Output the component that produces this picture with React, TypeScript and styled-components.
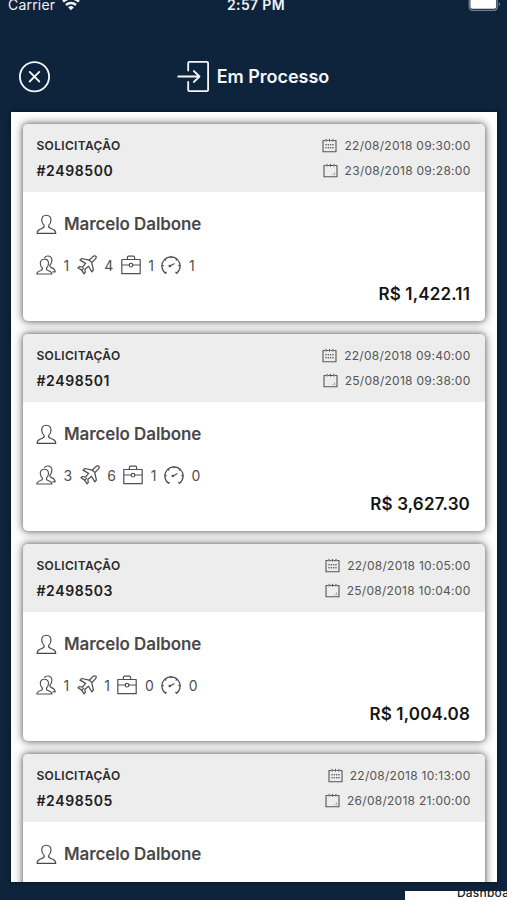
import React from 'react';
import styled, { createGlobalStyle } from 'styled-components';

const GlobalStyle = createGlobalStyle`
  *, *::before, *::after { box-sizing: border-box; }
  body { margin: 0; background: #0e243c; }
`;

const Screen = styled.div`
  width: 507px;
  height: 900px;
  overflow: hidden;
  display: flex;
  flex-direction: column;
  background: #0e243c;
  font-family: Inter, 'Liberation Sans', sans-serif;
`;

const StatusBar = styled.div`
  height: 41px;
  flex: none;
  display: grid;
  grid-template-columns: 1fr auto 1fr;
  align-items: start;
  color: #f0f3f6;
  padding: 0 2px 0 8px;
`;

const Carrier = styled.div`
  display: flex;
  gap: 7px;
  font-size: 14px;
  line-height: 18px;
  letter-spacing: 0.2px;
  margin-top: -4px;
`;

const Clock = styled.div`
  font-size: 14px;
  font-weight: 600;
  line-height: 18px;
  letter-spacing: 0.35px;
  margin: -4px 0 0 -1px;
`;

const Battery = styled.div`
  display: flex;
  justify-content: flex-end;
`;

const NavBar = styled.header`
  height: 71px;
  flex: none;
  display: grid;
  grid-template-columns: 1fr auto 1fr;
  align-items: start;
  padding: 19px 18px 0;
  color: #f4f7fa;
`;

const CloseButton = styled.button`
  width: 33px;
  height: 33px;
  padding: 0;
  border: 0;
  background: none;
  color: inherit;
`;

const Title = styled.h1`
  margin: 0 0 0 -1px;
  height: 33px;
  display: flex;
  align-items: center;
  gap: 7px;
  font-size: 18px;
  font-weight: 600;
  line-height: 24px;
  letter-spacing: -0.02px;
`;

const Panel = styled.main`
  margin: 0 10px 0 11px;
  height: 769.5px;
  flex: none;
  overflow: hidden;
  background: #fff;
  padding: 12px 12px 0;
  display: flex;
  flex-direction: column;
  gap: 13px;
  box-shadow: 0 0 4px #04101e;
`;

const Card = styled.article`
  height: 197px;
  flex: none;
  border-radius: 5px;
  background: #fff;
  box-shadow: 0 0 10px 1px rgba(0, 0, 0, 0.46), 0 0 4px rgba(0, 0, 0, 0.32);
`;

const CardHead = styled.div`
  height: 68px;
  display: flex;
  justify-content: space-between;
  padding: 9px 14.5px 0 13.500px;
  border-radius: 5px 5px 0 0;
  background: #ededed;
`;

const Column = styled.div<{ $end?: boolean }>`
  display: flex;
  flex-direction: column;
  align-items: ${(p) => (p.$end ? 'flex-end' : 'flex-start')};
`;

const Label = styled.div`
  font-size: 12px;
  line-height: 26px;
  height: 25px;
  font-weight: 600;
  letter-spacing: 0.32px;
  color: #2a2a2a;
`;

const RequestId = styled.div`
  font-size: 14px;
  line-height: 26px;
  font-weight: 600;
  letter-spacing: 0.6px;
  color: #202020;
`;

const DateLine = styled.div`
  display: flex;
  align-items: center;
  gap: 7px;
  height: 25px;
  font-size: 12px;
  letter-spacing: 0.27px;
  color: #555;
  white-space: nowrap;
`;

const CardBody = styled.div`
  padding: 20px 15px 0 13px;
  display: flex;
  flex-direction: column;
`;

const Person = styled.div`
  display: flex;
  align-items: center;
  gap: 7px;
  height: 24px;
  font-size: 17px;
  font-weight: 600;
  letter-spacing: -0.1px;
  color: #484848;
`;

const Counts = styled.div`
  display: flex;
  align-items: center;
  gap: 7.5px;
  height: 24px;
  margin-top: 17px;
`;

const Count = styled.div`
  display: flex;
  align-items: center;
  gap: 7.5px;
  font-size: 14px;
  color: #505050;
`;

const Price = styled.div`
  align-self: flex-end;
  margin-top: 5px;
  font-size: 17px;
  line-height: 24px;
  font-weight: 600;
  letter-spacing: 0.16px;
  color: #161616;
`;

const TabStrip = styled.footer`
  margin: 9.5px 0 0 405px;
  height: 9px;
  display: flex;
  justify-content: flex-start;
  align-items: flex-end;
  overflow: hidden;
  background: #fff;
  padding-left: 52px;
  font-size: 12px;
  font-weight: 500;
  line-height: 14px;
  letter-spacing: 0.2px;
  white-space: nowrap;
  color: #222;
`;

const Line = styled.svg<{ $weight?: number }>`
  display: block;
  flex: none;
  fill: none;
  stroke: currentColor;
  stroke-width: ${(p) => p.$weight ?? 1.15};
  stroke-linecap: round;
  stroke-linejoin: round;
`;

const WifiIcon = () => (
  <svg width="18" height="15" viewBox="0 0 18 15" fill="none" stroke="currentColor" strokeWidth="2.5">
    <path d="M1 5.7a11.5 11.5 0 0 1 16 0M4 9a7.3 7.3 0 0 1 10 0" />
    <path d="M9 14.2 6.2 11.4a4 4 0 0 1 5.6 0Z" fill="currentColor" stroke="none" />
  </svg>
);

const BatteryIcon = () => (
  <svg width="37" height="12" viewBox="0 0 37 12" fill="none">
    <path d="M1.3-4V7.2a3.2 3.2 0 0 0 3.2 3.2H26a3.2 3.2 0 0 0 3.2-3.2V-4" stroke="#71808e" strokeWidth="1.3" />
    <path d="M2.4-2V7a1.8 1.8 0 0 0 1.8 1.8h22.1A1.8 1.8 0 0 0 28.100 7v-9Z" fill="#fff" />
    <path d="M30.7 2.2c1.7.4 1.7 3.6 0 4Z" fill="#71808e" />
  </svg>
);

const CloseIcon = () => (
  <Line width="33" height="33" viewBox="0 0 33 33" $weight={1.8}>
    <circle cx="16.5" cy="16.7" r="14.6" />
    <path d="m11.7 11.9 9.6 9.6m0-9.6-9.6 9.6" />
  </Line>
);

const EnterIcon = () => (
  <Line width="33" height="33" viewBox="0 0 33 33" $weight={1.8}>
    <path d="M11.2 10.6V3.1a1.2 1.2 0 0 1 1.2-1.2h17.500a1.2 1.2 0 0 1 1.2 1.2v26.800a1.2 1.2 0 0 1-1.2 1.2H12.400a1.2 1.2 0 0 1-1.2-1.2v-8.100M1.200 16.500h21M16.800 11l5.700 5.500-5.700 5.500" />
  </Line>
);

const CalendarIcon = () => (
  <Line width="15" height="15" viewBox="0 0 15 15" $weight={1.1}>
    <path d="M2.600 2.500H1v11.200h13V2.500h-1.600M5.200 2.500h1M8.900 2.500h1M4 1.300v1.800M7.500 1.300v1.800M11 1.300v1.800" />
    <path d="M4 6.700h.1m2.200 0h.1m2.200 0h.1m2.200 0h.1M4 9.700h.1m2.200 0h.1m2.200 0h.1m2.200 0h.1" strokeWidth="1.5" />
  </Line>
);

const CalendarEndIcon = () => (
  <Line width="15" height="15" viewBox="0 0 15 15" $weight={1.1}>
    <path d="M2.600 2.500H1v11.200h13V2.500h-1.600M5.200 2.500h4.700M4 1.300v1.800M7.500 1.300v1.800M11 1.300v1.800" />
    <path d="M9.900 11.800v-.500m1.700.500v-2" stroke="#aaa" />
  </Line>
);

const UserIcon = () => (
  <Line width="21" height="21" viewBox="0 0 21 21">
    <path d="M10.3 1.2c-3.2 0-4.6 2-4.6 4.8 0 2.6 1 4.1 2.4 5.4.6 1.8-.3 2.4-2.2 3.1C2.6 15.7 1.3 16.4 1 19.3h18.8c-.3-2.9-1.6-3.600-4.9-4.800-1.9-.7-2.800-1.300-2.200-3.100C14.100 10.100 15 8.600 15 6c0-2.800-1.500-4.800-4.700-4.800Z" />
  </Line>
);

const UsersIcon = () => (
  <Line width="20" height="20" viewBox="0 0 20 20">
    <path d="M8.400 4.200c-2.900 0-4.100 1.800-4.100 4.200 0 2.200.9 3.500 2 4.600.5 1.600-.1 2-1.500 2.500C2 16.400.9 17 .8 19h15.100c-.1-2-1.200-2.600-3.900-3.500-1.400-.5-2-.9-1.500-2.500 1.100-1.100 2-2.400 2-4.600 0-2.400-1.200-4.200-4.100-4.200Z" />
    <path d="M8.600 2.300C9.300 1.400 10.300 1 11.700 1c2.900 0 4.200 1.700 4.200 4.300 0 2.200-.8 3.500-1.900 4.700-.5 1.500 0 2 1.500 2.600 2.400.9 3.600 1.700 3.700 4.200h-2.400" />
  </Line>
);

const PlaneIcon = () => (
  <Line width="20" height="20" viewBox="0 0 20 20" $weight={1.25}>
    <path d="M19 1.200c-1.100-.6-2.700-.1-3.700.9l-3.100 3.100-7.400-1.700L3 5.100l5.600 3.300-3.200 3.700-2.900-.6-1.500 1.300 3.700 2.300 2.300 3.800 1.300-1.500-.5-2.900 3.700-3.300 3.300 5.700 1.600-1.900-1.700-7.300 3.100-3.100C18.800 3.600 19.600 2.200 19 1.200Z" />
    <path d="m12.200 5.200 1.900 1.600M4.700 15.100l2-2" />
  </Line>
);

const BriefcaseIcon = () => (
  <Line width="20" height="20" viewBox="0 0 20 20" $weight={1.2}>
    <path d="M.8 4.500h18.400v14.200H.8ZM6.400 4.200V2.400c0-.8.400-1.200 1.200-1.200h4.800c.8 0 1.200.4 1.200 1.200v1.800M.8 10h7.400m3.600 0h7.400" />
    <circle cx="10" cy="10.200" r="1.800" />
  </Line>
);

const GaugeIcon = () => (
  <Line width="20" height="20" viewBox="0 0 20 20" $weight={1.25}>
    <path d="M4.500 18.300A9.100 9.100 0 1 1 15.500 18.300" />
    <path d="M1 10.500h1.300M4 4.300l.8.900M10 1.300v1.400m6 1.600-.8.900m3.800 5.300h-1.300M4.500 18.200l.7-.9m10.300.9-.7-.9" />
    <path d="m8.900 11 4.200-2.200" />
    <circle cx="8.800" cy="11" r=".7" />
  </Line>
);

type Request = {
  id: string;
  start: string;
  end: string;
  name: string;
  people: number;
  flights: number;
  bags: number;
  rides: number;
  price: string;
};

const requests: Request[] = [
  { id: '#2498500', start: '22/08/2018 09:30:00', end: '23/08/2018 09:28:00', name: 'Marcelo Dalbone', people: 1, flights: 4, bags: 1, rides: 1, price: 'R$ 1,422.11' },
  { id: '#2498501', start: '22/08/2018 09:40:00', end: '25/08/2018 09:38:00', name: 'Marcelo Dalbone', people: 3, flights: 6, bags: 1, rides: 0, price: 'R$ 3,627.30' },
  { id: '#2498503', start: '22/08/2018 10:05:00', end: '25/08/2018 10:04:00', name: 'Marcelo Dalbone', people: 1, flights: 1, bags: 0, rides: 0, price: 'R$ 1,004.08' },
  { id: '#2498505', start: '22/08/2018 10:13:00', end: '26/08/2018 21:00:00', name: 'Marcelo Dalbone', people: 1, flights: 1, bags: 0, rides: 0, price: 'R$ 1,004.08' },
];

const RequestCard = ({ request, partial }: { request: Request; partial: boolean }) => (
  <Card>
    <CardHead>
      <Column>
        <Label>SOLICITAÇÃO</Label>
        <RequestId>{request.id}</RequestId>
      </Column>
      <Column $end>
        <DateLine><CalendarIcon />{request.start}</DateLine>
        <DateLine><CalendarEndIcon />{request.end}</DateLine>
      </Column>
    </CardHead>
    <CardBody>
      <Person><UserIcon />{request.name}</Person>
      {!partial && (
        <>
          <Counts>
            <Count><UsersIcon />{request.people}</Count>
            <Count><PlaneIcon />{request.flights}</Count>
            <Count><BriefcaseIcon />{request.bags}</Count>
            <Count><GaugeIcon />{request.rides}</Count>
          </Counts>
          <Price>{request.price}</Price>
        </>
      )}
    </CardBody>
  </Card>
);

export default function App() {
  return (
    <>
      <GlobalStyle />
      <Screen>
        <StatusBar>
          <Carrier>Carrier<WifiIcon /></Carrier>
          <Clock>2:57 PM</Clock>
          <Battery><BatteryIcon /></Battery>
        </StatusBar>
        <NavBar>
          <CloseButton aria-label="Fechar"><CloseIcon /></CloseButton>
          <Title><EnterIcon />Em Processo</Title>
        </NavBar>
        <Panel>
          {requests.map((request, index) => (
            <RequestCard key={request.id} request={request} partial={index === requests.length - 1} />
          ))}
        </Panel>
        <TabStrip>Dashboard</TabStrip>
      </Screen>
    </>
  );
}
